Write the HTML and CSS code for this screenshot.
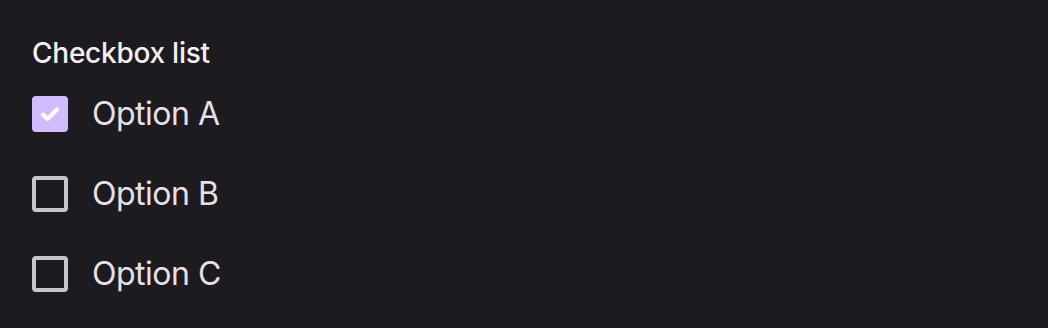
FILE: index.html
```html
<!DOCTYPE html>
<html lang="en">
<head>
    <meta charset="UTF-8">
    <meta name="viewport" content="width=device-width, initial-scale=1.0">
    <title>Checkbox list</title>
    <link rel="stylesheet" href="styles.css">
</head>
<body>
    <div class="panel">
        <h1 class="title">Checkbox list</h1>

        <!-- Options -->
        <ul class="options">
            <li class="option checked">
                <span class="box">
                    <svg viewBox="0 0 36 36" width="36" height="36">
                        <path d="M11 18.5 L15.5 23 L25 13.5" fill="none" stroke="#ffffff" stroke-width="4" stroke-linecap="round" stroke-linejoin="round"/>
                    </svg>
                </span>
                <span class="label">Option A</span>
            </li>
            <li class="option">
                <span class="box"></span>
                <span class="label">Option B</span>
            </li>
            <li class="option">
                <span class="box"></span>
                <span class="label">Option C</span>
            </li>
        </ul>
    </div>
</body>
</html>
```

FILE: styles.css
```css
/* General Styling */
body {
    font-family: 'Inter', 'Noto Sans', sans-serif;
    margin: 0;
    padding: 33px 32px 0;
    background: #1d1b20;
    color: #e6e0e9;
}

.title {
    margin: 0;
    font-size: 28px;
    font-weight: 500;
    line-height: 40px;
    letter-spacing: -0.25px;
    color: #f4eff4;
}

.options {
    list-style: none;
    margin: 1px 0 0;
    padding: 0;
}

.option {
    display: flex;
    align-items: center;
    gap: 24px;
    height: 80px;
}

.box {
    box-sizing: border-box;
    width: 36px;
    height: 36px;
    border: 4px solid #cac4d0;
    border-radius: 4px;
    flex-shrink: 0;
    position: relative;
}

.option.checked .box {
    background: #d0bcff;
    border-color: #d0bcff;
}

.box svg {
    position: absolute;
    left: -4px;
    top: -4px;
}

.label {
    font-size: 32px;
    line-height: 40px;
    letter-spacing: -0.5px;
    color: #e6e0e9;
}
```
